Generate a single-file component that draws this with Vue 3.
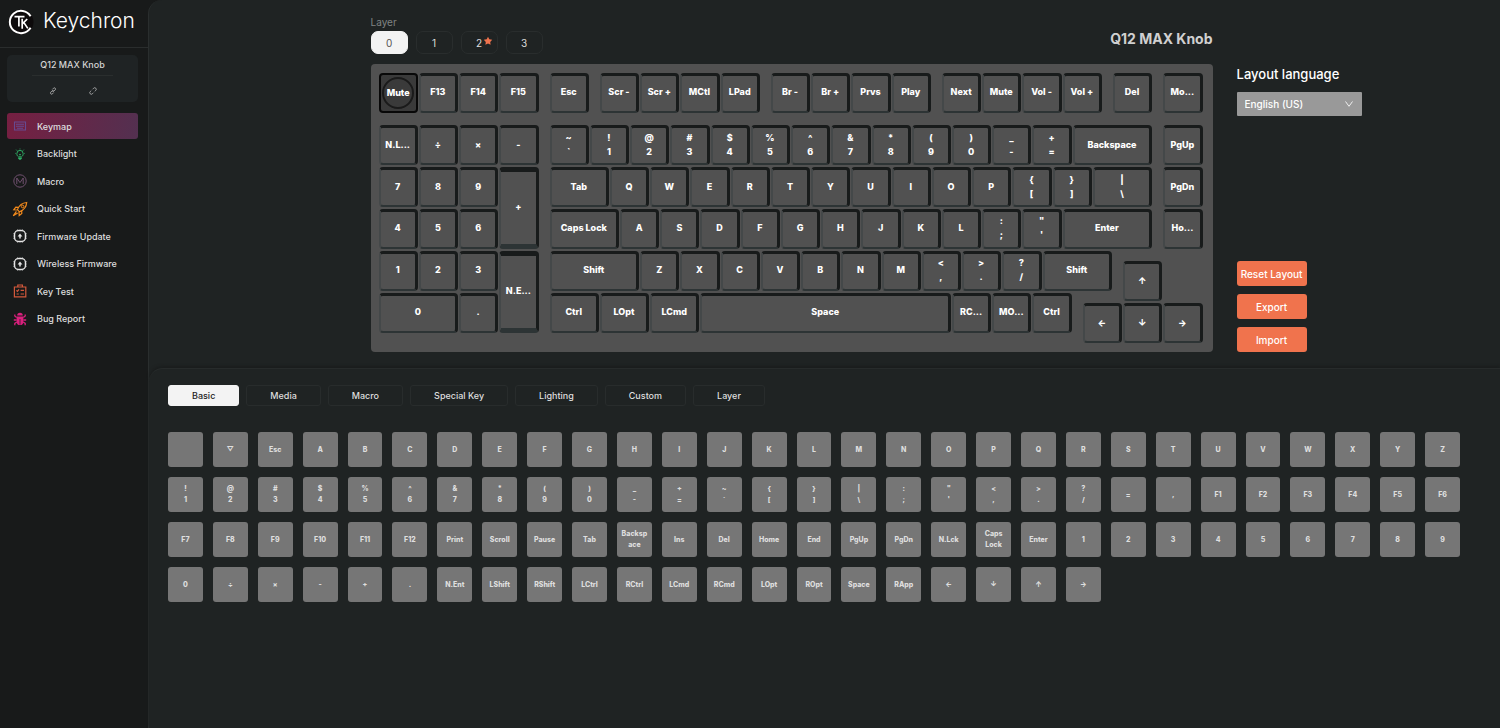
<script setup>
import { ref } from 'vue'

const menu = [
  { id: 'keymap', label: 'Keymap' },
  { id: 'light', label: 'Backlight' },
  { id: 'macro', label: 'Macro' },
  { id: 'rocket', label: 'Quick Start' },
  { id: 'chip', label: 'Firmware Update' },
  { id: 'chip', label: 'Wireless Firmware' },
  { id: 'test', label: 'Key Test' },
  { id: 'bug', label: 'Bug Report' }
]
const layers = ['0', '1', '2', '3']
const layer = ref('0')
const language = ref('English (US)')
const tabs = ['Basic', 'Media', 'Macro', 'Special Key', 'Lighting', 'Custom', 'Layer']
const tab = ref('Basic')

// Each run: [row, first column, keys]; positions and widths are in quarter key units.
const runs = [
  [0, 0, ['Mute', 'F13', 'F14', 'F15']],
  [0, 17, ['Esc']],
  [0, 22, ['Scr -', 'Scr +', 'MCtl', 'LPad']],
  [0, 39, ['Br -', 'Br +', 'Prvs', 'Play']],
  [0, 56, ['Next', 'Mute', 'Vol -', 'Vol +']],
  [0, 73, ['Del']],
  [0, 78, ['Mo...']],
  [5, 0, ['N.L...', '÷', '×', '-']],
  [5, 17, ['~\n`', '!\n1', '@\n2', '#\n3', '$\n4', '%\n5', '^\n6', '&\n7', '*\n8', '(\n9', ')\n0', '_\n-', '+\n=', ['Backspace', 8]]],
  [5, 78, ['PgUp']],
  [9, 0, ['7', '8', '9', ['+', 4, 8]]],
  [9, 17, [['Tab', 6], 'Q', 'W', 'E', 'R', 'T', 'Y', 'U', 'I', 'O', 'P', '{\n[', '}\n]', ['|\n\\', 6]]],
  [9, 78, ['PgDn']],
  [13, 0, ['4', '5', '6']],
  [13, 17, [['Caps Lock', 7], 'A', 'S', 'D', 'F', 'G', 'H', 'J', 'K', 'L', ':\n;', '"\n\'', ['Enter', 9]]],
  [13, 78, ['Ho...']],
  [17, 0, ['1', '2', '3', ['N.E...', 4, 8]]],
  [17, 17, [['Shift', 9], 'Z', 'X', 'C', 'V', 'B', 'N', 'M', '<\n,', '>\n.', '?\n/', ['Shift', 7]]],
  [18, 74, ['↑']],
  [21, 0, [['0', 8], '.']],
  [21, 17, [['Ctrl', 5], ['LOpt', 5], ['LCmd', 5], ['Space', 25], 'RC...', 'MO...', 'Ctrl']],
  [22, 70, ['←', '↓', '→']]
]
const keys = runs.flatMap(([row, start, list]) => {
  let col = start
  return list.map((k) => {
    const [label, w = 4, h = 4] = Array.isArray(k) ? k : [k]
    const key = { label, tall: h > 4, knob: row === 0 && col === 0, style: { gridArea: `${row + 1} / ${col + 1} / span ${h} / span ${w}` } }
    col += w
    return key
  })
})

const palette = [
  '', '▽', 'Esc', ...'ABCDEFGHIJKLMNOPQRSTUVWXYZ',
  '!\n1', '@\n2', '#\n3', '$\n4', '%\n5', '^\n6', '&\n7', '*\n8', '(\n9', ')\n0', '_\n-', '+\n=', '~\n`', '{\n[', '}\n]', '|\n\\', ':\n;', '"\n\'', '<\n,', '>\n.', '?\n/', '=', ',',
  'F1', 'F2', 'F3', 'F4', 'F5', 'F6', 'F7', 'F8', 'F9', 'F10', 'F11', 'F12',
  'Print', 'Scroll', 'Pause', 'Tab', 'Backsp\nace', 'Ins', 'Del', 'Home', 'End', 'PgUp', 'PgDn', 'N.Lck', 'Caps\nLock', 'Enter',
  ...'1234567890', '÷', '×', '-', '+', '.', 'N.Ent', 'LShift', 'RShift', 'LCtrl', 'RCtrl', 'LCmd', 'RCmd', 'LOpt', 'ROpt', 'Space', 'RApp', '←', '↓', '↑', '→'
]
</script>

<template>
  <div class="app">
    <aside class="sidebar">
      <header class="brand">
        <svg class="brand-mark" viewBox="0 0 26 26" fill="none" stroke="#fff">
          <circle cx="13" cy="13" r="12.5" fill="#0d0a0b" stroke="none" />
          <path d="M22.6 7.2A11.2 11.2 0 1 0 22.6 18.8" stroke-width="2" />
          <path d="M6.5 7.6H16.5M10.9 7.6V17.5M14.2 9.8V19.8M19.2 10L14.6 14.6M15.9 13.6L19.8 19.4" stroke-width="1.7" />
        </svg>
        <span class="brand-name">Keychron</span>
      </header>
      <section class="device">
        <h2>Q12 MAX Knob</h2>
        <div class="device-links">
          <button type="button" aria-label="Connect">
            <svg viewBox="0 0 12 12"><path d="M5 3.6L6.8 1.8a1.7 1.7 0 0 1 2.5 2.5L7.4 6.2a1.7 1.7 0 0 1-2.4 0M7 8.4L5.2 10.2a1.7 1.7 0 0 1-2.5-2.5L4.6 5.8a1.7 1.7 0 0 1 2.4 0" /></svg>
          </button>
          <button type="button" aria-label="Disconnect">
            <svg viewBox="0 0 12 12"><path d="M5.4 3.4L7 1.8a2.2 2.2 0 0 1 3.2 3.2L8.6 6.6M6.6 8.6L5 10.2a2.2 2.2 0 0 1-3.2-3.2L3.4 5.4" /></svg>
          </button>
        </div>
      </section>
      <nav class="menu">
        <a v-for="(m, i) in menu" :key="m.label" href="#" :class="{ active: i === 0 }">
          <svg v-if="m.id === 'keymap'" viewBox="0 0 16 16" fill="none" stroke="#664a91">
            <path d="M2.5 4h11v8h-11zM4 6.2h8M4 8.2h8M5 10.2h6" stroke-width="1.1" />
          </svg>
          <svg v-else-if="m.id === 'light'" viewBox="0 0 16 16" fill="none" stroke="#2fae66">
            <path d="M6.4 10.8C5.2 9.9 4.7 8.8 4.9 7.5a3.1 3.1 0 0 1 6.2 0c.2 1.3-.3 2.4-1.5 3.3zM5 4.6l-.8-.9M11 4.6l.8-.9M8 3.4V2.6M3.8 7.4H3.2M12.2 7.4h.6M7 8.3l1 .8l1-.8" />
            <path d="M6.2 11.4h3.6v1.2L8.8 13.8H7.2L6.2 12.6z" fill="#2fae66" stroke="none" />
          </svg>
          <svg v-else-if="m.id === 'macro'" viewBox="0 0 16 16" fill="none" stroke="#70506f">
            <circle cx="8" cy="8" r="6.2" /><path d="M4.8 11V5L8 9.6L11.2 5v6" />
          </svg>
          <svg v-else-if="m.id === 'rocket'" viewBox="0 0 16 16" fill="none" stroke="#f28a1c">
            <path d="M5.4 8.6C7 4.6 10 1.8 14.7 1.5C14.4 6.2 11.4 9.3 7.4 10.9zM6.3 6.4L3.8 6.2L1.8 8.8L5 9M9.7 9.8L9.8 12.4L7.2 14.6L7 11M4.4 10.4L1.2 14.8L5.7 12" stroke-width="1.2" />
            <circle cx="10.6" cy="5.5" r="1.3" />
          </svg>
          <svg v-else-if="m.id === 'chip'" viewBox="0 0 16 16" fill="none" stroke="#e6e6e6">
            <rect x="2.6" y="2.6" width="10.8" height="10.8" rx="3.6" stroke-width="1.3" />
            <path d="M5.8 1.4v1.2M8 1.4v1.2M10.2 1.4v1.2M5.8 13.4v1.2M8 13.4v1.2M10.2 13.4v1.2M1.4 5.8h1.2M1.4 8h1.2M1.4 10.2h1.2M13.4 5.8h1.2M13.4 8h1.2M13.4 10.2h1.2" />
            <path d="M8 10.4V7.4" stroke-width="1.5" /><path d="M5.6 8.4L8 5.6l2.4 2.8z" fill="#e6e6e6" stroke="none" />
          </svg>
          <svg v-else-if="m.id === 'test'" viewBox="0 0 16 16" fill="none" stroke="#d3583b" stroke-width="1.2">
            <path d="M2.4 4h11.4v9.8H2.4zM5.8 4V2h4.6v2M4.4 7.4l1 1l1.6-2M8.6 7.4h3.4M4.6 11h2.2M8.6 11h3.4" />
          </svg>
          <svg v-else viewBox="0 0 16 16" fill="none" stroke="#d9207d">
            <path d="M5.2 4.6a2.8 2.8 0 0 1 5.6 0zM4.6 5.4h6.8v4.8a3.4 3.9 0 0 1-6.8 0z" fill="#d9207d" stroke="none" />
            <path d="M4.6 6.4L2.8 5V3.4M11.4 6.4L13.2 5V3.4M4.6 9H1.8M11.4 9h2.8M4.8 11l-2 1.4v1.8M11.2 11l2 1.4v1.8" stroke-width="1.3" />
            <path d="M8 8v5.6" stroke="#181a1a" stroke-width="0.7" />
          </svg>
          <span>{{ m.label }}</span>
        </a>
      </nav>
    </aside>

    <main class="main">
      <section class="editor">
        <div class="editor-head">
          <div>
            <div class="layer-label">Layer</div>
            <div class="layers">
              <button v-for="l in layers" :key="l" type="button" :class="{ active: l === layer }" @click="layer = l">
                {{ l }}
                <svg v-if="l === '2'" class="star" viewBox="0 0 10 10"><path d="M5 .8L6.3 3.3L9.2 3.8L7.2 5.9L7.6 8.8L5 7.6L2.4 8.8L2.8 5.9L.8 3.8L3.7 3.3z" /></svg>
              </button>
            </div>
          </div>
          <h1>Q12 MAX Knob</h1>
        </div>
        <div class="board">
          <button v-for="(k, i) in keys" :key="i" type="button" class="key" :class="{ tall: k.tall, knob: k.knob }" :style="k.style"><span>{{ k.label }}</span></button>
        </div>
        <div class="side">
          <div>
            <label for="language">Layout language</label>
            <div class="select">
              <select id="language" v-model="language"><option>English (US)</option></select>
              <svg viewBox="0 0 10 10"><path d="M1.5 2.5L5 7.3L8.5 2.5" /></svg>
            </div>
          </div>
          <div class="actions">
            <button type="button">Reset Layout</button>
            <button type="button">Export</button>
            <button type="button">Import</button>
          </div>
        </div>
      </section>

      <section class="drawer">
        <div class="tabs">
          <button v-for="t in tabs" :key="t" type="button" :class="{ active: t === tab }" @click="tab = t">{{ t }}</button>
        </div>
        <div class="palette">
          <button v-for="(p, i) in palette" :key="i" type="button" :aria-label="p || 'None'">{{ p }}</button>
        </div>
      </section>
    </main>
  </div>
</template>

<style>
body {
  background: #181a1a;
}
</style>

<style scoped>
.app {
  display: flex;
  min-height: 100vh;
  font-family: Inter, "Liberation Sans", sans-serif;
  color: #fff;
}
.app * {
  box-sizing: border-box;
}
button, select {
  font-family: inherit;
  color: inherit;
  margin: 0;
  padding: 0;
  border: 0;
  background: none;
}
h1, h2 {
  margin: 0;
}
.sidebar {
  flex: none;
  width: 148px;
  background: #181a1a;
}
.brand {
  display: flex;
  align-items: center;
  gap: 9px;
  height: 48px;
  padding: 0 8px 3px;
  border-bottom: 1px solid #2a2d2d;
}
.brand-mark {
  flex: none;
  width: 26px;
  height: 26px;
}
.brand-name {
  padding-bottom: 2px;
  font-size: 21px;
  font-weight: 300;
  line-height: 24px;
}
.device {
  margin: 7px 10px 0 7px;
  height: 47px;
  border-radius: 5px;
  background: #1f2324;
}
.device h2 {
  margin: 0 25px;
  padding-top: 3px;
  height: 21px;
  border-bottom: 1px solid #2a2e2e;
  font-size: 9px;
  font-weight: 500;
  line-height: 14px;
  text-align: center;
  white-space: nowrap;
  color: #d4d4d4;
}
.device-links {
  display: flex;
  justify-content: center;
  gap: 32px;
  padding-top: 11px;
}
.device-links button {
  height: 8px;
}
.device-links svg {
  display: block;
  width: 8px;
  height: 8px;
  fill: none;
  stroke: #c8c8c8;
  stroke-width: 1.1;
}
.menu {
  display: flex;
  flex-direction: column;
  justify-content: space-between;
  height: 219px;
  margin: 11px 10px 0 7px;
}
.menu a {
  display: flex;
  align-items: center;
  gap: 9px;
  height: 26px;
  padding-left: 5px;
  border-radius: 3px;
  font-size: 9px;
  font-weight: 500;
  white-space: nowrap;
  text-decoration: none;
  color: #dedede;
}
.menu a.active {
  background: linear-gradient(100deg, #761f41, #533050);
}
.menu svg {
  width: 16px;
  height: 16px;
}
.main {
  flex: 1;
  min-width: 0;
  display: flex;
  flex-direction: column;
  border-left: 1px solid #2a2e2e;
  border-top-left-radius: 14px;
  background: #1f2323;
}
.editor {
  display: grid;
  grid-template-columns: 8fr minmax(0, 842px) 149px 5fr;
  grid-template-rows: 64px auto;
  padding-bottom: 16px;
}
.editor-head {
  grid-area: 1 / 2;
  display: flex;
  justify-content: space-between;
}
.layer-label {
  padding-top: 14px;
  font-size: 10px;
  line-height: 16px;
  color: #808484;
}
.layers {
  display: flex;
  gap: 8px;
  margin-top: 1px;
}
.layers button {
  position: relative;
  width: 37px;
  height: 23px;
  border: 1px solid #292d2d;
  border-radius: 7px;
  font-size: 10px;
  color: #dcdcdc;
}
.layers button.active {
  background: #f3f3f3;
  border-color: #f3f3f3;
  color: #555;
}
.star {
  position: absolute;
  top: 4px;
  right: 4px;
  width: 10px;
  height: 10px;
  fill: #f0734d;
}
h1 {
  padding-top: 30px;
  font-size: 14px;
  font-weight: 700;
  line-height: 18px;
  color: #d0d0d0;
}
.board {
  grid-area: 2 / 2;
  display: grid;
  grid-template-columns: repeat(82, minmax(0, 1fr));
  grid-template-rows: repeat(26, minmax(0, 1fr));
  height: 288px;
  padding: 8px 9px 8px 8px;
  border-radius: 4px;
  background: #515151;
}
.key {
  margin: 1px 1px 1px 0;
  padding-bottom: 2px;
  overflow: hidden;
  border: 2px solid #181b1b;
  border-width: 3px 3px 2px 2px;
  border-color: #181b1b #181b1b #2d3435 #444849;
  border-radius: 4px;
  font-size: 9px;
  font-weight: 800;
  line-height: 14px;
  white-space: pre;
  text-align: center;
}
.key.tall {
  border-top-width: 5px;
  border-bottom-width: 5px;
}
.key.knob {
  display: flex;
  align-items: center;
  justify-content: center;
  padding-bottom: 0;
  border: 2px solid #080808;
  background: #3a3a3a;
}
.key.knob span {
  flex: none;
  width: 32px;
  height: 32px;
  border: 2px solid #1a1a1a;
  border-radius: 50%;
  line-height: 27px;
  display: flex;
  justify-content: center;
}
.side {
  grid-area: 2 / 3;
  display: flex;
  flex-direction: column;
  justify-content: space-between;
  padding-left: 24px;
}
.side label {
  display: block;
  padding-top: 2px;
  font-size: 13px;
  line-height: 16px;
  font-weight: 500;
  white-space: nowrap;
}
.select {
  position: relative;
  margin-top: 10px;
}
.select select {
  display: block;
  appearance: none;
  width: 100%;
  height: 24px;
  padding: 0 8px;
  border-radius: 1px;
  background: #999;
  font-size: 10px;
  font-weight: 500;
}
.select svg {
  position: absolute;
  top: 7px;
  right: 8px;
  width: 10px;
  height: 10px;
  fill: none;
  stroke: #eee;
  pointer-events: none;
}
.actions {
  display: flex;
  flex-direction: column;
  gap: 8px;
}
.actions button {
  width: 70px;
  height: 25px;
  border-radius: 3px;
  background: #f0734d;
  font-size: 10px;
  font-weight: 500;
  white-space: nowrap;
}
.drawer {
  flex: 1;
  padding: 16px 40px 16px 19px;
  border-top: 1px solid #272b2b;
  border-top-left-radius: 14px;
  box-shadow: 0 -2px 3px #1a1d1d;
}
.tabs {
  display: flex;
  gap: 7px;
}
.tabs button {
  height: 21px;
  padding: 0 23px;
  border: 1px solid #282c2c;
  border-radius: 3px;
  font-size: 9px;
  font-weight: 500;
  color: #dedede;
}
.tabs button.active {
  background: #f3f3f3;
  border-color: #f3f3f3;
  color: #222;
}
.palette {
  display: grid;
  grid-template-columns: repeat(29, minmax(0, 1fr));
  gap: 10px;
  margin-top: 26px;
}
.palette button {
  aspect-ratio: 1;
  border-radius: 3px;
  background: #767676;
  color: #dedede;
  font-size: 7px;
  font-weight: 800;
  line-height: 11px;
  white-space: pre;
  text-align: center;
}
</style>
